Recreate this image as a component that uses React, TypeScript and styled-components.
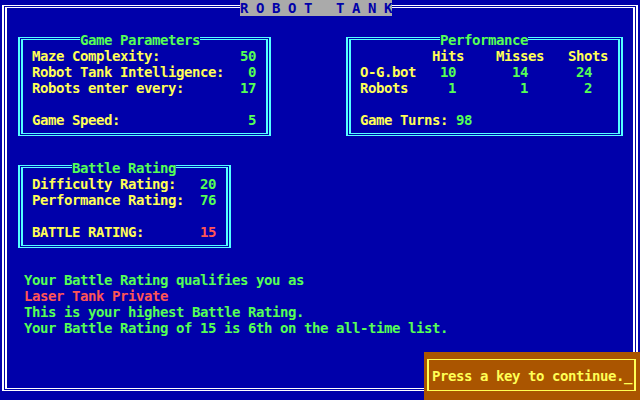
import { FC } from 'react';
import styled, { createGlobalStyle } from 'styled-components';

// 80x25 text mode, 8x16 character cells
const CELL_W = 8;
const CELL_H = 16;

const BLUE = '#0000aa';
const CYAN = '#55ffff';
const YELLOW = '#ffff55';
const GREEN = '#55ff55';
const RED = '#ff5555';
const BROWN = '#aa5500';
const GREY = '#aaaaaa';
const WHITE = '#ffffff';

const GlobalStyle = createGlobalStyle`
  html, body {
    margin: 0;
    padding: 0;
    background: ${BLUE};
    overflow: hidden;
  }
`;

// double-line box like the ╔═╗ characters: ═ on cell rows 5/7, ║ on cell cols 2-3/5-6
const doubleFrame = (colour: string) => `
  &::before,
  &::after {
    content: '';
    position: absolute;
    border: solid ${colour};
    border-width: 1px 2px;
    pointer-events: none;
  }
  &::before {
    inset: 5px 1px 8px 2px;
  }
  &::after {
    inset: 7px 4px 10px 5px;
  }
`;

const Screen = styled.main`
  position: relative;
  width: ${80 * CELL_W}px;
  height: ${25 * CELL_H}px;
  display: grid;
  grid-template-columns: repeat(80, ${CELL_W}px);
  grid-template-rows: repeat(25, ${CELL_H}px);
  background: ${BLUE};
  font-family: 'DejaVu Sans Mono', 'Liberation Mono', monospace;
  font-weight: bold;
  font-size: 14px;
  letter-spacing: -0.4287px;
  line-height: ${CELL_H}px;
  white-space: pre;
  color: ${YELLOW};
  ${doubleFrame(WHITE)}
  &::before {
    inset: 5px 2px 9px 2px;
  }
  &::after {
    inset: 7px 5px 11px 5px;
  }
`;

const TitleBar = styled.h1`
  grid-column: 31 / span 19;
  grid-row: 1;
  position: relative;
  z-index: 1;
  margin: 0;
  font: inherit;
  background: ${GREY};
  color: ${BLUE};
`;

const Panel = styled.section<{ $col: number; $row: number; $cols: number; $rows: number }>`
  grid-column: ${(p) => p.$col + 1} / span ${(p) => p.$cols};
  grid-row: ${(p) => p.$row + 1} / span ${(p) => p.$rows};
  position: relative;
  display: flex;
  flex-direction: column;
  ${doubleFrame(CYAN)}
`;

const Legend = styled.h2<{ $offset: number }>`
  position: relative;
  z-index: 1;
  margin: 0 0 0 ${(p) => p.$offset * CELL_W}px;
  width: fit-content;
  height: ${CELL_H}px;
  font: inherit;
  background: ${BLUE};
  color: ${GREEN};
`;

const Body = styled.div`
  padding-left: ${2 * CELL_W}px;
  display: flex;
  flex-direction: column;
`;

const Row = styled.div<{ $width: number }>`
  display: flex;
  justify-content: space-between;
  width: ${(p) => p.$width * CELL_W}px;
  height: ${CELL_H}px;
`;

const Blank = styled.div`
  height: ${CELL_H}px;
`;

const Label = styled.span`
  color: ${YELLOW};
`;

const Value = styled.span<{ $red?: boolean }>`
  color: ${(p) => (p.$red ? RED : GREEN)};
`;

const Table = styled.div`
  display: grid;
  grid-template-columns: ${9 * CELL_W}px ${8 * CELL_W}px ${9 * CELL_W}px ${5 * CELL_W}px;
  grid-auto-rows: ${CELL_H}px;
`;

const Num = styled.span<{ $pad: number }>`
  color: ${GREEN};
  text-align: right;
  padding-right: ${(p) => p.$pad * CELL_W}px;
`;

const Messages = styled.div`
  grid-column: 4 / span 76;
  grid-row: 18 / span 4;
  display: flex;
  flex-direction: column;
`;

const Line = styled.p<{ $red?: boolean }>`
  margin: 0;
  height: ${CELL_H}px;
  color: ${(p) => (p.$red ? RED : GREEN)};
`;

const Prompt = styled.div`
  grid-column: 54 / span 27;
  grid-row: 23 / span 3;
  position: relative;
  z-index: 1;
  background: ${BROWN};
  color: ${YELLOW};
  padding: ${CELL_H}px 0 0 ${CELL_W}px;
  &::before {
    content: '';
    position: absolute;
    inset: 7px 4px 9px 3px;
    border: solid ${YELLOW};
    border-width: 1px 2px;
  }
`;

const params = [
  ['Maze Complexity:', '50'],
  ['Robot Tank Intelligence:', '0'],
  ['Robots enter every:', '17'],
];

const App: FC = () => (
  <>
    <GlobalStyle />
    <Screen>
      <TitleBar>R O B O T   T A N K</TitleBar>

      <Panel $col={2} $row={2} $cols={32} $rows={7}>
        <Legend $offset={8}>Game Parameters</Legend>
        <Body>
          {params.map(([label, value]) => (
            <Row key={label} $width={28}>
              <Label>{label}</Label>
              <Value>{value}</Value>
            </Row>
          ))}
          <Blank />
          <Row $width={28}>
            <Label>Game Speed:</Label>
            <Value>5</Value>
          </Row>
        </Body>
      </Panel>

      <Panel $col={43} $row={2} $cols={35} $rows={7}>
        <Legend $offset={12}>Performance</Legend>
        <Body>
          <Table>
            <span />
            <Label>Hits</Label>
            <Label>Misses</Label>
            <Label>Shots</Label>
            <Label>O-G.bot</Label>
            <Num $pad={5}>10</Num>
            <Num $pad={5}>14</Num>
            <Num $pad={2}>24</Num>
            <Label>Robots</Label>
            <Num $pad={5}>1</Num>
            <Num $pad={5}>1</Num>
            <Num $pad={2}>2</Num>
          </Table>
          <Blank />
          <Row $width={14}>
            <Label>Game Turns:</Label>
            <Value>98</Value>
          </Row>
        </Body>
      </Panel>

      <Panel $col={2} $row={10} $cols={27} $rows={6}>
        <Legend $offset={7}>Battle Rating</Legend>
        <Body>
          <Row $width={23}>
            <Label>Difficulty Rating:</Label>
            <Value>20</Value>
          </Row>
          <Row $width={23}>
            <Label>Performance Rating:</Label>
            <Value>76</Value>
          </Row>
          <Blank />
          <Row $width={23}>
            <Label>BATTLE RATING:</Label>
            <Value $red>15</Value>
          </Row>
        </Body>
      </Panel>

      <Messages>
        <Line>Your Battle Rating qualifies you as</Line>
        <Line $red>Laser Tank Private</Line>
        <Line>This is your highest Battle Rating.</Line>
        <Line>Your Battle Rating of 15 is 6th on the all-time list.</Line>
      </Messages>

      <Prompt>Press a key to continue._</Prompt>
    </Screen>
  </>
);

export default App;
